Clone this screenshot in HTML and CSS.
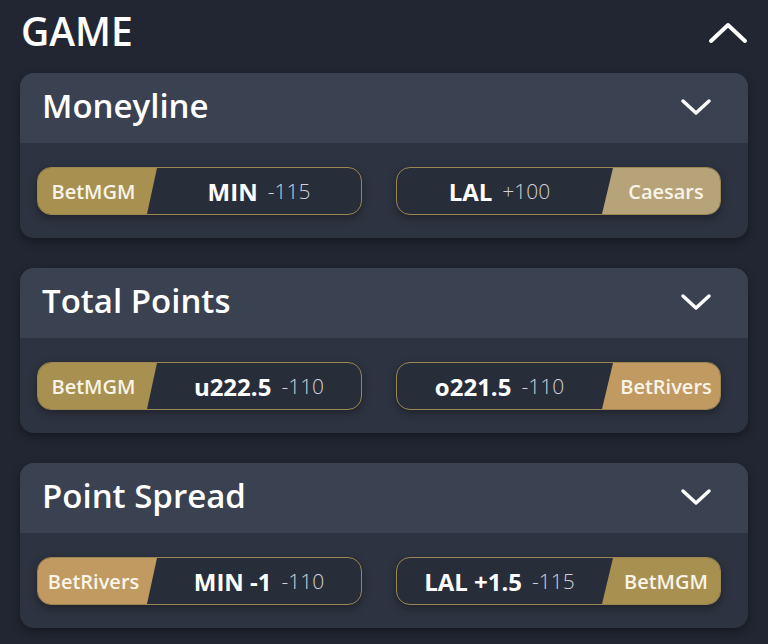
FILE: index.html
```html
<!DOCTYPE html>
<html lang="en">
<head>
    <meta charset="UTF-8">
    <meta name="viewport" content="width=device-width, initial-scale=1.0">
    <title>Game odds</title>
    <link rel="stylesheet" href="styles.css">
</head>
<body>
    <div class="section-head">
        <h1>GAME</h1>
        <svg class="chevron-up" width="40" height="22" viewBox="0 0 40 22">
            <path d="M3 19 L20 3 L37 19" fill="none" stroke="#fff" stroke-width="4" stroke-linecap="round" stroke-linejoin="round"/>
        </svg>
    </div>

    <div class="market">
        <div class="market-head">
            <h2>Moneyline</h2>
            <svg class="chevron" width="32" height="18" viewBox="0 0 32 18">
                <path d="M3 3 L16 15 L29 3" fill="none" stroke="#fff" stroke-width="3.5" stroke-linecap="round" stroke-linejoin="round"/>
            </svg>
        </div>
        <div class="market-body">
            <div class="odds">
                <div class="book book-left mgm">BetMGM</div>
                <div class="pick"><b>MIN</b><span>-115</span></div>
            </div>
            <div class="odds">
                <div class="pick"><b>LAL</b><span>+100</span></div>
                <div class="book book-right caesars">Caesars</div>
            </div>
        </div>
    </div>

    <div class="market">
        <div class="market-head">
            <h2>Total Points</h2>
            <svg class="chevron" width="32" height="18" viewBox="0 0 32 18">
                <path d="M3 3 L16 15 L29 3" fill="none" stroke="#fff" stroke-width="3.5" stroke-linecap="round" stroke-linejoin="round"/>
            </svg>
        </div>
        <div class="market-body">
            <div class="odds">
                <div class="book book-left mgm">BetMGM</div>
                <div class="pick"><b>u222.5</b><span>-110</span></div>
            </div>
            <div class="odds">
                <div class="pick"><b>o221.5</b><span>-110</span></div>
                <div class="book book-right rivers">BetRivers</div>
            </div>
        </div>
    </div>

    <div class="market">
        <div class="market-head">
            <h2>Point Spread</h2>
            <svg class="chevron" width="32" height="18" viewBox="0 0 32 18">
                <path d="M3 3 L16 15 L29 3" fill="none" stroke="#fff" stroke-width="3.5" stroke-linecap="round" stroke-linejoin="round"/>
            </svg>
        </div>
        <div class="market-body">
            <div class="odds">
                <div class="book book-left rivers">BetRivers</div>
                <div class="pick"><b>MIN -1</b><span>-110</span></div>
            </div>
            <div class="odds">
                <div class="pick"><b>LAL +1.5</b><span>-115</span></div>
                <div class="book book-right mgm">BetMGM</div>
            </div>
        </div>
    </div>
</body>
</html>
```

FILE: styles.css
```css
body {
    font-family: "Open Sans", Lato, sans-serif;
    background: #222632;
    color: #fff;
    margin: 0;
    padding: 0 20px;
}
.section-head {
    display: flex;
    align-items: center;
    justify-content: space-between;
    height: 73px;
}
.section-head h1 {
    margin: 0 0 12px 1px;
    font-size: 39px;
    font-weight: 600;
}
.chevron-up {
    margin: 0 0 8px 0;
}
.market {
    border-radius: 14px;
    overflow: hidden;
    margin-bottom: 30px;
    background: #2e3341;
    box-shadow: 0 4px 10px rgba(0, 0, 0, 0.35);
}
.market-head {
    display: flex;
    align-items: center;
    justify-content: space-between;
    height: 70px;
    padding: 0 36px 0 22px;
    background: #3a4150;
}
.market-head h2 {
    margin: 0 0 6px 0;
    font-size: 33px;
    font-weight: 600;
}
.market-head .chevron {
    margin-bottom: 2px;
}
.market-body {
    display: flex;
    gap: 34px;
    padding: 24px 27px 23px 17px;
}
.odds {
    flex: 1;
    display: flex;
    height: 48px;
    box-sizing: border-box;
    border: 1.5px solid #9c8752;
    border-radius: 14px;
    background: #282d3a;
    overflow: hidden;
    box-shadow: 0 3px 8px rgba(0, 0, 0, 0.35);
}
.book {
    width: 119px;
    box-sizing: border-box;
    display: flex;
    align-items: center;
    justify-content: center;
    font-size: 20px;
    font-weight: 600;
    color: #f8f4e8;
}
.book-left {
    padding-right: 8px;
    clip-path: polygon(0 0, 100% 0, calc(100% - 10px) 100%, 0 100%);
}
.book-right {
    width: 118px;
    padding-left: 10px;
    clip-path: polygon(11px 0, 100% 0, 100% 100%, 0 100%);
}
.mgm {
    background: #a89050;
}
.caesars {
    background: #b7a379;
}
.rivers {
    background: #c09a60;
}
.pick {
    flex: 1;
    display: flex;
    align-items: center;
    justify-content: center;
    gap: 10px;
}
.pick b {
    font-size: 24px;
    font-weight: 700;
}
.pick span {
    font-size: 21px;
    font-weight: 300;
    color: #cfd2da;
}
```
